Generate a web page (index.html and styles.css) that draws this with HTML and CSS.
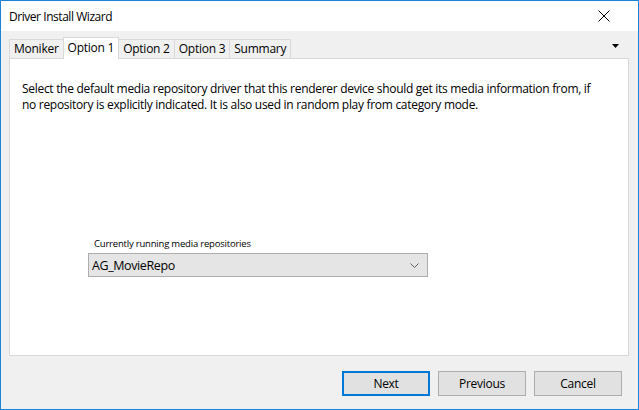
FILE: index.html
```html
<!DOCTYPE html>
<html>
<head>
<meta charset="utf-8">
<link rel="stylesheet" href="styles.css">
</head>
<body>
<div class="window">
  <div class="titlebar">
    <span class="title">Driver Install Wizard</span>
    <svg class="close" width="12" height="12" viewBox="0 0 12 12"><path d="M0.5 0.5 L11.5 11.5 M11.5 0.5 L0.5 11.5" stroke="#000" stroke-width="1" fill="none"/></svg>
  </div>
  <div class="client">
    <div class="tabstrip">
      <div class="tab">Moniker</div>
      <div class="tab active">Option 1</div>
      <div class="tab">Option 2</div>
      <div class="tab">Option 3</div>
      <div class="tab">Summary</div>
      <svg class="overflow" width="7" height="4" viewBox="0 0 7 4"><path d="M0 0 H7 L3.5 4 Z" fill="#000"/></svg>
    </div>
    <div class="panel">
      <p class="desc">Select the default media repository driver that this renderer device should get its media information from, if no repository is explicitly indicated. It is also used in random play from category mode.</p>
      <div class="field">
        <div class="label">Currently running media repositories</div>
        <div class="combo">
          <span>AG_MovieRepo</span>
          <svg width="9" height="5" viewBox="0 0 9 5"><path d="M0.5 0.5 L4.5 4.5 L8.5 0.5" stroke="#606060" stroke-width="1" fill="none"/></svg>
        </div>
      </div>
    </div>
    <div class="buttons">
      <button class="btn default">Next</button>
      <button class="btn">Previous</button>
      <button class="btn">Cancel</button>
    </div>
  </div>
</div>
</body>
</html>
```
FILE: styles.css
```css
html, body {
  margin: 0;
  padding: 0;
  background: #ffffff;
}
body {
  font-family: "Open Sans", "Noto Sans", sans-serif;
  font-size: 12px;
  color: #000;
}
.window {
  width: 639px;
  height: 410px;
  box-sizing: border-box;
  border: 1px solid #1883d7;
  display: flex;
  flex-direction: column;
  background: #f0f0f0;
}
.titlebar {
  height: 30px;
  background: #fff;
  display: flex;
  align-items: center;
  padding: 0 28px 0 8px;
  flex: none;
}
.title {
  flex: 1;
  font-size: 12px;
  letter-spacing: -0.45px;
}
.close {
  display: block;
}
.client {
  flex: 1;
  display: flex;
  flex-direction: column;
  padding: 6px 8px 0 8px;
}
.tabstrip {
  height: 21px;
  display: flex;
  align-items: flex-end;
  position: relative;
  z-index: 1;
}
.tab {
  height: 19px;
  box-sizing: border-box;
  border: 1px solid #d9d9d9;
  border-bottom: none;
  background: #f0f0f0;
  padding: 0 4px;
  line-height: 18px;
  letter-spacing: -0.25px;
  margin-right: -1px;
}
.tab.active {
  background: #fff;
  line-height: 20px;
  margin-bottom: -1px;
  height: 22px;
  position: relative;
}
.overflow {
  margin-left: auto;
  margin-right: 11px;
  align-self: center;
  position: relative;
  top: -2px;
}
.panel {
  height: 298px;
  box-sizing: border-box;
  background: #fff;
  border: 1px solid #d9d9d9;
  margin-right: 1px;
  padding: 22px 12px 0 12px;
  flex: none;
}
.desc {
  margin: 0;
  line-height: 16px;
  letter-spacing: -0.3px;
  width: 572px;
}
.field {
  margin: 124px 0 0 66px;
  width: 340px;
}
.label {
  font-size: 9.5px;
  letter-spacing: -0.2px;
  line-height: 14px;
  padding-left: 6px;
  margin-bottom: 2px;
}
.combo {
  height: 24px;
  box-sizing: border-box;
  border: 1px solid #adadad;
  background: #e5e5e5;
  display: flex;
  align-items: center;
  justify-content: space-between;
  padding: 0 8px 0 3px;
  font-size: 12.5px;
  letter-spacing: -0.4px;
}
.buttons {
  display: flex;
  justify-content: flex-end;
  gap: 8px;
  padding: 15px 8px 0 0;
}
.btn {
  width: 88px;
  height: 25px;
  box-sizing: border-box;
  border: 1px solid #adadad;
  background: #e1e1e1;
  font-family: "Open Sans", "Noto Sans", sans-serif;
  font-size: 12px;
  letter-spacing: -0.3px;
  color: #000;
  padding: 0;
  margin: 0;
}
.btn.default {
  border: 2px solid #0078d7;
}
```
